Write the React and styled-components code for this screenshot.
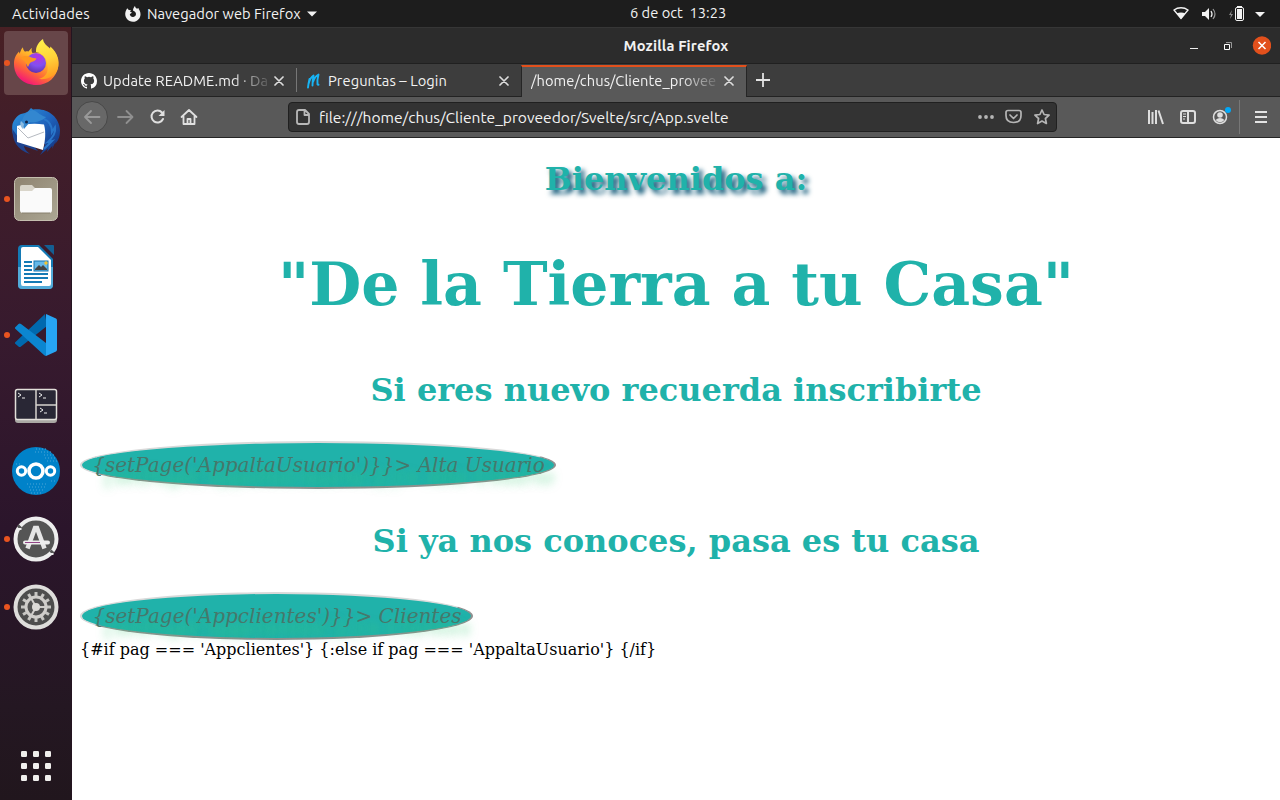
import React from "react";
import styled, { createGlobalStyle } from "styled-components";

const Global = createGlobalStyle`
  * { box-sizing: border-box; }
  html, body { margin: 0; padding: 0; }
  body { background: #fff; overflow: hidden; }
  svg { display: block; flex: none; }
`;

const Desktop = styled.div`
  width: 1280px;
  height: 800px;
  display: flex;
  flex-direction: column;
  font-family: Ubuntu, "Noto Sans", sans-serif;
  font-size: 14.67px;
  color: #f2f2f2;
`;

const TopBar = styled.header`
  height: 27px;
  flex: none;
  background: #1d1d1d;
  display: grid;
  grid-template-columns: 618px auto 1fr;
  align-items: center;
  padding: 0 14px 0 12px;
`;

const Group = styled.div`
  display: flex;
  align-items: center;
  justify-content: ${(p) => p.$end ? "flex-end" : "flex-start"};
  gap: ${(p) => p.$gap || 0}px;
`;

const Label = styled.span`
  white-space: pre;
  line-height: 20px;
  font-weight: ${(p) => (p.$bold ? 700 : 400)};
  font-size: ${(p) => p.$size || 14.67}px;
  letter-spacing: ${(p) => p.$ls || 0}px;
`;

const AppMenu = styled(Group)`
  margin-left: 35px;
`;

const Clock = styled(Label)`
  padding-bottom: 1px;
`;

const Main = styled.div`
  flex: 1;
  display: flex;
  min-height: 0;
`;

const Dock = styled.nav`
  width: 72px;
  flex: none;
  display: flex;
  flex-direction: column;
  align-items: center;
  gap: 4px;
  padding: 4px 0 2px;
  background: linear-gradient(180deg, #482024 0%, #421e29 12%, #371a2e 40%, #2b152b 65%, #241722 88%, #21161d 100%);
  border-right: 1px solid #241420;
`;

const DockItem = styled.div`
  width: 72px;
  height: 64px;
  flex: none;
  display: flex;
  align-items: center;
  padding-left: 4px;
`;

const Dot = styled.i`
  width: 6px;
  height: 6px;
  border-radius: 50%;
  margin-right: -6px;
  background: ${(p) => (p.$on ? "#e95420" : "transparent")};
  z-index: 1;
`;

const DockTile = styled.div`
  width: 64px;
  height: 64px;
  border-radius: 4px;
  display: flex;
  align-items: center;
  justify-content: center;
  background: ${(p) => (p.$active ? "#674649" : "transparent")};
`;

const AppsItem = styled(DockItem)`
  margin-top: auto;
`;

const Browser = styled.section`
  flex: 1;
  display: flex;
  flex-direction: column;
  min-width: 0;
`;

const TitleBar = styled.div`
  height: 37px;
  flex: none;
  display: grid;
  grid-template-columns: 1fr auto 1fr;
  align-items: center;
  background: #2c2c2c;
  border-top: 1px solid #363636;
  border-bottom: 1px solid #202020;
  padding: 0 9px;
`;

const TabStrip = styled.div`
  height: 33px;
  flex: none;
  display: flex;
  background: #3d3d3d;
`;

const Tab = styled.div`
  width: ${(p) => p.$w}px;
  display: flex;
  align-items: center;
  padding: 2px 12px 0 9px;
  border-bottom: 1px solid #232323;
`;

const ActiveTab = styled(Tab)`
  margin-top: 1px;
  padding-top: 0;
  padding-bottom: 3px;
  background: #595959;
  border: solid #252525;
  border-width: 2px 1px 0;
  border-top-color: #e2501c;
`;

const Divider = styled.i`
  width: 1px;
  height: ${(p) => p.$h}px;
  background: #777;
  align-self: center;
`;

const TabDividerCell = styled.span`
  display: flex;
  border-bottom: 1px solid #232323;
`;

const TabText = styled(Label)`
  margin-left: ${(p) => p.$ml}px;
  margin-right: auto;
  letter-spacing: 0.08px;
  mask-image: ${(p) => (p.$fade ? "linear-gradient(90deg, #000 calc(100% - 36px), rgba(0,0,0,.15))" : "none")};
`;

const TabRest = styled.div`
  flex: 1;
  display: flex;
  align-items: center;
  padding-left: 9px;
  border-bottom: 1px solid #232323;
`;

const NavBar = styled.div`
  height: 41px;
  flex: none;
  display: flex;
  align-items: center;
  background: #595959;
  border-bottom: 1px solid #252525;
  padding: 0 12px 0 4px;
`;

const BackButton = styled.div`
  width: 32px;
  height: 32px;
  border-radius: 50%;
  border: 1px solid #484848;
  background: #686868;
  display: flex;
  align-items: center;
  justify-content: center;
`;

const NavIcons = styled(Group)`
  width: 180px;
  padding-left: 8px;
`;

const UrlBar = styled.div`
  width: 769px;
  height: 30px;
  display: flex;
  align-items: center;
  padding: 0 5px 0 6px;
  border: 1px solid #202020;
  border-radius: 4px;
  background: #333;
`;

const Url = styled(Label)`
  flex: 1;
  margin-left: 8px;
`;

const NavTools = styled(Group)`
  flex: 1;
`;

const ToolDivider = styled(Divider)`
  margin: 0 14px 0 6px;
`;

const Page = styled.main`
  flex: 1;
  background: #fff;
  color: #000;
  padding: 0 8px;
  font-family: "DejaVu Serif", serif;
  font-size: 16px;
`;

const Heading = styled.h2`
  margin: 0;
  text-align: center;
  color: #20b2aa;
  font-weight: 700;
  font-size: ${(p) => p.$size || 32}px;
  line-height: 38px;
  white-space: nowrap;
  padding-top: ${(p) => p.$top}px;
  text-shadow: ${(p) => (p.$shadow ? "4px 4px 5px #0f5878" : "none")};
`;

const OvalButton = styled.button`
  display: block;
  width: ${(p) => p.$w}px;
  height: 48px;
  margin-top: 32px;
  padding: 0 0 0 1px;
  border: 2px solid;
  border-color: #d9d9d9 #909090 #909090 #d9d9d9;
  border-radius: 50%;
  background: #20b2aa;
  color: #46786b;
  font-family: "DejaVu Serif", serif;
  font-style: italic;
  font-size: 20px;
  line-height: 24px;
  white-space: nowrap;
  text-shadow: 9px 12px 8px rgba(60, 205, 120, 0.6);
`;

const Source = styled.p`
  margin: 0;
  line-height: 19px;
  white-space: nowrap;
`;

const Close = () => (
  <svg width="10" height="10" viewBox="0 0 10 10" stroke="#ddd" strokeWidth="1.7" strokeLinecap="round">
    <path d="M1 1l8 8M9 1l-8 8" />
  </svg>
);

const Caret = () => (
  <svg width="10" height="6" viewBox="0 0 10 6"><path d="M0 .5h10L5 5.5z" fill="#f2f2f2" /></svg>
);

const FirefoxMono = () => (
  <svg width="16" height="16" viewBox="0 0 16 16">
    <path fill="#f2f2f2" d="M2.2 2.2 3.8 4 6 4.2 5 5.8 7 6.4 5.8 7.6 4.8 8c.2 2 1.7 3.2 3.5 3 2-.2 3-2 2.6-3.6C10.500 5.800 9 5 8 4.500 8 2.500 9 1 10 0c.2 1.400 1 2.200 2 2.800L13.500 2c.1 1 .5 1.400 1 2.300 3 5.500-1 11.500-6.500 11.500C2.500 15.800-.3 11 .3 7 .5 5 1.300 4 1.500 3.500z" />
  </svg>
);

const FirefoxIcon = () => (
  <svg width="48" height="48" viewBox="0 0 48 48">
    <defs>
      <linearGradient id="ffBody" x1=".8" y1=".1" x2=".25" y2=".95">
        <stop offset="0" stopColor="#ffe43b" /><stop offset=".35" stopColor="#ffb02a" />
        <stop offset=".65" stopColor="#ff6b35" /><stop offset="1" stopColor="#f3127b" />
      </linearGradient>
      <radialGradient id="ffGlobe" cx=".6" cy=".2" r=".9">
        <stop offset="0" stopColor="#b833e1" /><stop offset=".5" stopColor="#8150f0" /><stop offset="1" stopColor="#582a9e" />
      </radialGradient>
      <linearGradient id="ffTail" x1=".4" y1="0" x2=".6" y2="1">
        <stop offset="0" stopColor="#fff04a" /><stop offset=".5" stopColor="#ffd23a" /><stop offset="1" stopColor="#ff9a1f" />
      </linearGradient>
    </defs>
    <path fill="url(#ffBody)" d="M9.500 10 11 8.300c0 2 .7 3.300 2 4.400 1.300-.4 2.500-.4 3.500-.2 1-1.500 2.500-3 3.500-3.500-.8 1.800-.5 3.500.5 5L42 12c3.700 5 4.700 10.500 4.300 15C45 38 36 46 24.500 46 11 46 2 37 2 25 2 19 4 15.500 7 12.500l.5 2.200z" />
    <circle cx="24" cy="24" r="10" fill="url(#ffGlobe)" />
    <path fill="url(#ffTail)" d="M24 11.500c.2-5 3.200-8.800 7-11.500.5 4.500 3.500 6 7 9.500l.4-2C46.500 15 47.500 22 46 29 43.500 37 36 41 27 40c7-2 9.500-7 8.500-13C35.500 20 31 14 24 13z" />
    <path fill="#ff9720" d="M8 19c3-2.500 7-2.500 9.500-1.500C20 19 23 19 24.500 19.500c-.5 2-3 3-5 3.500-2 .8-2.500 3-3.500 5C14 25 14 22 8 19z" />
  </svg>
);

const ThunderbirdIcon = () => (
  <svg width="48" height="50" viewBox="0 -2 48 50">
    <defs>
      <linearGradient id="tb" x1="0" y1="0" x2="1" y2="1">
        <stop offset="0" stopColor="#2c95dc" /><stop offset=".5" stopColor="#1f63bd" /><stop offset="1" stopColor="#122b75" />
      </linearGradient>
    </defs>
    <path fill="url(#tb)" d="M13 5 16 3.500 19 0l2 1.500C35-.5 47 8 48 22c0 6-1 10-5 14l1-3-4 8 .5-3.500L35 44l1-3.500L28 47c3-4 4-7 5-11L6 33C.5 29-.5 22 .5 16 2 11 6 7 9 6z" />
    <path fill="#1e438f" d="M.4 21C0 32 5 42 18 46c-4-3-6-6-6-8l14 5-7-8-11-3z" />
    <path fill="#fff" d="M5 18c7-2 18-3 27-1.500 2 7 1.500 15-1 25.500L5 34z" />
    <path d="M6 20l10 10 16-6" fill="none" stroke="#b6bac1" strokeWidth="1" />
    <path fill="#3387d0" d="M21 2C15 3 11 7 9.500 15L12 21 18 14c4 1 13-1 16-5-5-1-8-5-13-7z" />
    <path fill="#8dbbe0" d="M9 13 12 16 11 21C8.500 19 7.500 16 9 13z" />
    <circle cx="14.500" cy="14" r="1.500" fill="#122449" />
    <path d="M32 11c5 2 8 6 8 13l3-5c1 6-2 10-7 15l4-1-8 8" fill="none" stroke="#2976ca" strokeWidth="2" />
  </svg>
);

const FilesIcon = () => (
  <svg width="46" height="46" viewBox="0 0 46 46">
    <defs><linearGradient id="files" x1="0" y1="0" x2="1" y2="1"><stop stopColor="#8e8370" /><stop offset="1" stopColor="#aca794" /></linearGradient></defs>
    <rect x="1.500" y="1.500" width="43" height="43" rx="5" fill="url(#files)" stroke="#c5bfaf" />
    <path d="M7 14V11q0-2 2-2h10l3 3h14q2 0 2 2v5H7z" fill="#d9d5ca" />
    <path d="M7 15h12l3-3h15q2 0 2 2v20q0 3-3 3H10q-3 0-3-3z" fill="#fafafa" />
    <path d="M9 37h28" stroke="#88806e" />
  </svg>
);

const WriterIcon = () => (
  <svg width="38" height="46" viewBox="0 0 38 46">
    <path d="M5 1h17l14 14v26q0 4-4 4H5q-4 0-4-4V5q0-4 4-4z" fill="#147ab5" />
    <path d="M1 23h3v18h30V23h2v18q0 4-4 4H5q-4 0-4-4z" fill="#52abd9" />
    <path d="M6 3h15l13 13v24q0 2-2 2H6q-2 0-2-2V5q0-2 2-2z" fill="#fff" />
    <path d="M27 1h9q1 0 1 1v9z" fill="#145f93" />
    <path d="M7 18h8M7 22h8M7 26h8M7 30h24M7 34h24M7 38h18" stroke="#147ab5" strokeWidth="2" />
    <rect x="17" y="17" width="14" height="10" fill="#65b9e9" stroke="#1474ae" />
    <path d="m18 25 4-4 2 2 2-2 4 4v1H18z" fill="#444" /><circle cx="29" cy="19" r="1.700" fill="#f4c42f" />
  </svg>
);

const CodeIcon = () => (
  <svg width="44" height="44" viewBox="0 0 44 44">
    <path d="M1 29.500 31 1l2 12L7 33.500q-1.500 1-2.500 0L1 30.500z" fill="#0069ae" />
    <path d="M1 14.500 4.500 11q1.200-1 2.500 0l25 19v13q-1 0-2-1L1 15.500z" fill="#0b86d0" />
    <path d="M32 1 42 5.500q1 .5 1 2v29q0 1.500-1 2L32 43z" fill="#27a5f3" />
  </svg>
);

const TerminalIcon = () => (
  <svg width="44" height="42" viewBox="0 -6 44 42">
    <rect x="1" y="3" width="42" height="32" rx="3" fill="#aaa8a4" />
    <rect x="1.500" y="1.500" width="41" height="30" rx="2" fill="#292735" stroke="#e2dfda" strokeWidth="1.500" />
    <path d="M22 2v29M22 17h20" stroke="#d5d2cd" strokeWidth="1.500" />
    <path d="m4 5 3 2-3 2m4 1h3M25 5l3 2-3 2m4 1h3M26 20l3 2-3 2m4 1h3" fill="none" stroke="#eee" strokeWidth="1" />
  </svg>
);

const NextcloudIcon = () => (
  <svg width="48" height="48" viewBox="0 0 48 48">
    <circle cx="24" cy="24" r="24" fill="#0082c9" />
    <path d="M24 2h12M23 5h18M32 8h10M33 11h12M35 14h10M15 37h20M17 40h18M18 43h14M19 46h10M4 17h4M39 34h4" stroke="#4aa5d8" strokeWidth="1" strokeDasharray="1 2" />
    <g fill="#0082c9" stroke="#fff"><circle cx="24" cy="24" r="7" strokeWidth="3.600" /><circle cx="9.500" cy="24" r="4.200" strokeWidth="3" /><circle cx="38.500" cy="24" r="4.200" strokeWidth="3" /></g>
  </svg>
);

const UpdaterIcon = () => (
  <svg width="46" height="46" viewBox="0 0 46 46">
    <circle cx="23" cy="23" r="20.500" fill="#555" stroke="#eee" strokeWidth="4" />
    <path d="m5.500 12 2-2M38 37l2-2" stroke="#555" strokeWidth="4.500" />
    <path d="M4.500 13h4M36.500 38h4" stroke="#eee" strokeWidth="2" />
    <path d="M14.500 32.500 22 12h2l7.500 20.500" fill="none" stroke="#e6e6e6" strokeWidth="4.500" />
    <path d="M12 26.500h23" stroke="#eee" strokeWidth="4" strokeLinecap="round" /><path d="M12 26.500h15" stroke="#924587" />
  </svg>
);

const SettingsIcon = () => (
  <svg width="46" height="46" viewBox="0 0 46 46">
    <circle cx="23" cy="23" r="20.500" fill="#4d4d4d" stroke="#dedddb" strokeWidth="4" />
    <g stroke="#c7c6c3" strokeWidth="3">{Array.from({ length: 12 }, (_, i) => <path key={i} d="M23 8v4" transform={`rotate(${i * 30} 23 23)`} />)}</g>
    <circle cx="23" cy="23" r="10" fill="#525252" stroke="#cfcdca" strokeWidth="3" />
    <g stroke="#cfcdca" strokeWidth="2"><path d="M23 23h10M23 23l-5-9M23 23l-5 9" /></g>
    <circle cx="23" cy="23" r="4" fill="#dcdad7" />
  </svg>
);

const GridIcon = () => (
  <svg width="30" height="30" viewBox="0 0 30 30" fill="#f0efed">
    {[0, 12, 24].flatMap((y) => [0, 12, 24].map((x) => <rect key={`${x}-${y}`} x={x} y={y} width="6" height="6" rx="1.200" />))}
  </svg>
);

const StatusIcons = () => (
  <svg width="96" height="18" viewBox="0 0 96 18">
    <path d="M4 5c4-3 10-3 14 0l-7 8.500z" fill="none" stroke="#f2f2f2" strokeWidth="1.300" /><path d="M6.500 8.500c3-1.500 6-1.500 9 0L11 14z" fill="#f2f2f2" />
    <path d="M32 7h3l4-4v12l-4-4h-3z" fill="#f2f2f2" /><path d="M41 6q2 3 0 6" fill="none" stroke="#eee" strokeWidth="1.300" /><path d="M43 4q4 5 0 10" fill="none" stroke="#999" strokeWidth="1.200" />
    <path d="m62 5-3 5h2l-1 4 3-5h-2z" fill="#8a8a8a" />
    <rect x="65.500" y="2.500" width="8" height="13" rx="1.500" fill="none" stroke="#f2f2f2" /><path d="M67 1h5v1.500h-5zM67 4h5v10h-5z" fill="#f2f2f2" />
    <path d="M85 7h10l-5 5z" fill="#f2f2f2" />
  </svg>
);

const WindowControls = () => (
  <svg width="84" height="20" viewBox="0 0 84 20" fill="none">
    <path d="M3 12.500h8" stroke="#eee" /><path d="M39 6.500h5.500V12" stroke="#999" /><path d="M37.500 8.500h5v5h-5z" stroke="#fff" />
    <circle cx="75" cy="9.500" r="9.200" fill="#e2501c" /><path d="m71.500 6 7 7m0-7-7 7" stroke="#fff" strokeWidth="1.500" />
  </svg>
);

const GithubIcon = () => (
  <svg width="16" height="16" viewBox="0 0 16 16" fill="#fff">
    <path d="M8 0C3.580 0 0 3.580 0 8c0 3.540 2.290 6.530 5.470 7.590.4.070.55-.17.55-.38 0-.19-.01-.82-.01-1.490-2.010.37-2.530-.49-2.690-.94-.09-.23-.48-.94-.82-1.130-.28-.15-.68-.52-.01-.53.63-.01 1.080.58 1.230.82.72 1.210 1.870.87 2.330.66.07-.52.28-.87.51-1.070-1.780-.2-3.640-.89-3.640-3.950 0-.87.31-1.590.82-2.150-.08-.2-.36-1.020.08-2.120 0 0 .67-.21 2.200.82a7.600 7.600 0 0 1 4 0c1.530-1.040 2.200-.82 2.200-.82.44 1.100.16 1.920.08 2.120.51.56.82 1.270.82 2.150 0 3.070-1.870 3.750-3.650 3.950.29.25.54.73.54 1.480 0 1.070-.01 1.930-.01 2.200 0 .21.15.46.55.38A8 8 0 0 0 16 8c0-4.420-3.580-8-8-8z" />
  </svg>
);

const MIcon = () => (
  <svg width="16" height="16" viewBox="0 0 16 16" fill="none" stroke="#18b4f4" strokeWidth="1.900" strokeLinecap="round" strokeLinejoin="round">
    <path d="M3.500 6Q2.500 10 2 14.500M2.500 11Q4.500 4 7.500 2.500Q6.500 8 6.500 12.500M7 9Q9 3 12.500 1.500Q11 7 11.500 11.500l1 .2" />
  </svg>
);

const NavGlyphs = () => (
  <svg width="84" height="20" viewBox="0 0 84 20" fill="none" strokeLinecap="round" strokeLinejoin="round">
    <path d="M2 10h14M10.500 4l6 6-6 6" stroke="#909090" strokeWidth="1.800" />
    <path d="M46 5.500A6 6 0 1 0 47 12" stroke="#e0e0e0" strokeWidth="2" /><path d="M48.500 3v6h-6z" fill="#e0e0e0" />
    <path d="m65.500 10 7.500-7 7.500 7M67.500 9.500V17h11V9.500M71.500 17v-5h3v5" stroke="#e0e0e0" strokeWidth="1.800" />
  </svg>
);

const BackArrow = () => (
  <svg width="18" height="16" viewBox="0 0 18 16" fill="none" stroke="#999" strokeWidth="1.800" strokeLinecap="round" strokeLinejoin="round"><path d="M16.500 8H2M8 2 2 8l6 6" /></svg>
);

const DocIcon = () => (
  <svg width="16" height="18" viewBox="0 0 16 18" fill="none" stroke="#b8b8b8" strokeWidth="1.800" strokeLinejoin="round"><path d="M4 2h6l4 4v8q0 2-2 2H4q-2 0-2-2V4q0-2 2-2zM9.500 2v5H14" /></svg>
);

const UrlTools = () => (
  <svg width="74" height="18" viewBox="0 0 74 18" fill="none" stroke="#b5b5b5" strokeWidth="1.700" strokeLinecap="round" strokeLinejoin="round">
    <g fill="#b5b5b5" stroke="none"><circle cx="3" cy="9" r="1.900" /><circle cx="9" cy="9" r="1.900" /><circle cx="15" cy="9" r="1.900" /></g>
    <path d="M31 2.500h11q2 0 2 2v3q0 7-7.500 7T29 7.500V4.500q0-2 2-2zM33 7l3.500 3.500L40 7" />
    <path d="m65 2 2.100 4.500 5 .6-3.700 3.400 1 5-4.400-2.500-4.400 2.500 1-5-3.700-3.400 5-.6z" />
  </svg>
);

const ToolGlyphs = () => (
  <svg width="86" height="24" viewBox="0 0 86 24" fill="none" stroke="#dedede" strokeWidth="2">
    <path d="M2 5v14M5.500 7v12M9 5v14M11.500 5.500l4.500 13.500" strokeWidth="2" />
    <rect x="34" y="6" width="14" height="12" rx="2" /><path d="M41 6v12" /><path d="M36 9h3M36 11.500h3M36 14h2" strokeWidth="1" />
    <circle cx="73" cy="12" r="6.500" strokeWidth="1.500" /><circle cx="73" cy="10" r="2.800" fill="#dedede" stroke="none" /><path d="M68.500 15q4.500-4 9 0-4.500 4.500-9 0" fill="#dedede" stroke="none" /><circle cx="81" cy="5" r="3" fill="#00a8f8" stroke="none" />
  </svg>
);

const dockApps = [
  { name: "firefox", Icon: FirefoxIcon, running: true, active: true },
  { name: "thunderbird", Icon: ThunderbirdIcon },
  { name: "files", Icon: FilesIcon, running: true },
  { name: "writer", Icon: WriterIcon },
  { name: "code", Icon: CodeIcon, running: true },
  { name: "terminal", Icon: TerminalIcon },
  { name: "nextcloud", Icon: NextcloudIcon },
  { name: "updater", Icon: UpdaterIcon, running: true },
  { name: "settings", Icon: SettingsIcon, running: true },
];

export default function App() {
  return (
    <Desktop>
      <Global />
      <TopBar>
        <Group>
          <Label $ls={0.22}>Actividades</Label>
          <AppMenu $gap={6}>
            <FirefoxMono />
            <Label $ls={0.04}>Navegador web Firefox</Label>
            <Caret />
          </AppMenu>
        </Group>
        <Clock>6 de oct  13:23</Clock>
        <Group $end><StatusIcons /></Group>
      </TopBar>
      <Main>
        <Dock>
          {dockApps.map(({ name, Icon, running, active }) => (
            <DockItem key={name}>
              <Dot $on={running} />
              <DockTile $active={active}><Icon /></DockTile>
            </DockItem>
          ))}
          <AppsItem><DockTile><GridIcon /></DockTile></AppsItem>
        </Dock>
        <Browser>
          <TitleBar>
            <span />
            <Label $bold $ls={0.15}>Mozilla Firefox</Label>
            <Group $end><WindowControls /></Group>
          </TitleBar>
          <TabStrip>
            <Tab $w={224}>
              <GithubIcon />
              <TabText $ml={6} $fade>Update README.md · Da</TabText>
              <Close />
            </Tab>
            <TabDividerCell><Divider $h={24} /></TabDividerCell>
            <Tab $w={224}>
              <MIcon />
              <TabText $ml={6}>Preguntas – Login</TabText>
              <Close />
            </Tab>
            <ActiveTab $w={226}>
              <TabText $ml={0} $fade>/home/chus/Cliente_provee</TabText>
              <Close />
            </ActiveTab>
            <TabRest>
              <svg width="14" height="14" viewBox="0 0 14 14"><path d="M7 0v14M0 7h14" stroke="#e3e3e3" strokeWidth="1.800" /></svg>
            </TabRest>
          </TabStrip>
          <NavBar>
            <BackButton><BackArrow /></BackButton>
            <NavIcons><NavGlyphs /></NavIcons>
            <UrlBar>
              <DocIcon />
              <Url $size={15.6}>file:///home/chus/Cliente_proveedor/Svelte/src/App.svelte</Url>
              <UrlTools />
            </UrlBar>
            <NavTools $end>
              <ToolGlyphs />
              <ToolDivider $h={34} />
              <svg width="14" height="14" viewBox="0 0 14 14"><path d="M1 2h12M1 7h12M1 12h12" stroke="#e3e3e3" strokeWidth="2" /></svg>
            </NavTools>
          </NavBar>
          <Page>
            <Heading $top={22} $shadow>Bienvenidos a:</Heading>
            <Heading $top={67} $size={60}>"De la Tierra a tu Casa"</Heading>
            <Heading $top={68}>Si eres nuevo recuerda inscribirte</Heading>
            <OvalButton $w={476}>{"{setPage('AppaltaUsuario')}}> Alta Usuario"}</OvalButton>
            <Heading $top={33}>Si ya nos conoces, pasa es tu casa</Heading>
            <OvalButton $w={393}>{"{setPage('Appclientes')}}> Clientes"}</OvalButton>
            <Source>{"{#if pag === 'Appclientes'} {:else if pag === 'AppaltaUsuario'} {/if}"}</Source>
          </Page>
        </Browser>
      </Main>
    </Desktop>
  );
}
